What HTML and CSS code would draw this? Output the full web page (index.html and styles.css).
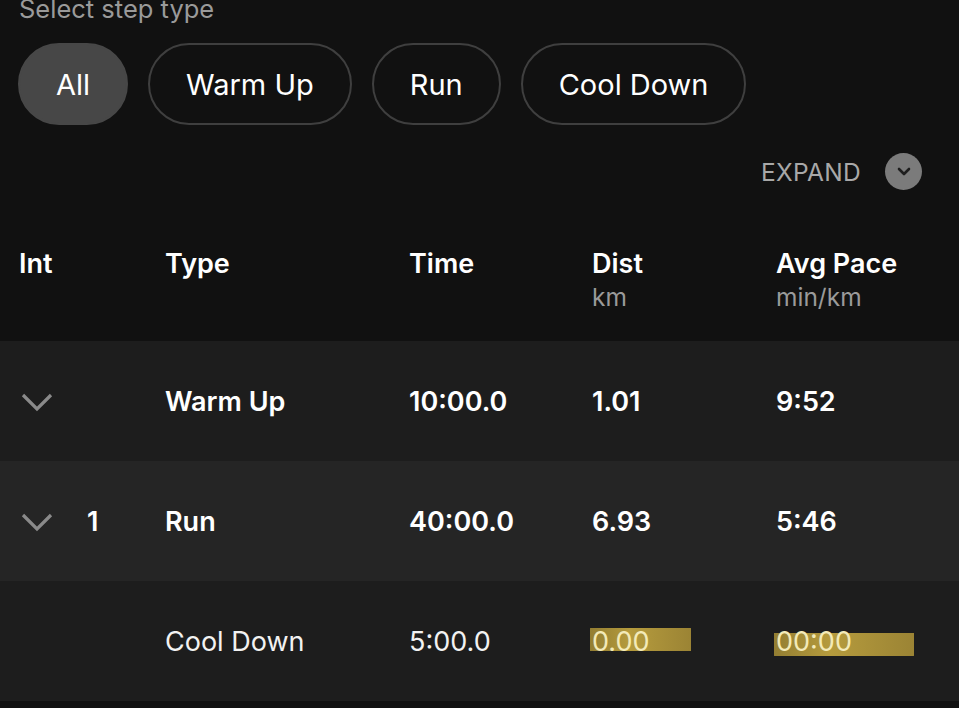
FILE: index.html
```html
<!DOCTYPE html>
<html lang="en">
<head>
<meta charset="utf-8">
<title>Workout steps</title>
<link rel="stylesheet" href="styles.css">
</head>
<body>
<div class="top">
  <div class="label">Select step type</div>
  <div class="pills">
    <button class="pill active">All</button>
    <button class="pill">Warm Up</button>
    <button class="pill">Run</button>
    <button class="pill">Cool Down</button>
  </div>
  <div class="expand">
    <span class="expand-text">EXPAND</span>
    <span class="expand-btn">
      <svg width="14" height="9" viewBox="0 0 14 9"><polyline points="2,2 7,7 12,2" fill="none" stroke="#1e1e1e" stroke-width="2.6" stroke-linecap="round" stroke-linejoin="round"/></svg>
    </span>
  </div>
</div>

<div class="table">
  <div class="row head">
    <div class="cell">Int</div>
    <div class="cell">Type</div>
    <div class="cell">Time</div>
    <div class="cell">Dist<span class="unit">km</span></div>
    <div class="cell">Avg Pace<span class="unit">min/km</span></div>
  </div>

  <div class="row body odd">
    <div class="cell int">
      <svg class="chev" width="32" height="19" viewBox="0 0 32 19"><polyline points="2,2 16,16 30,2" fill="none" stroke="#8a8a8a" stroke-width="3.2"/></svg>
    </div>
    <div class="cell">Warm Up</div>
    <div class="cell">10:00.0</div>
    <div class="cell">1.01</div>
    <div class="cell">9:52</div>
  </div>

  <div class="row body even">
    <div class="cell int">
      <svg class="chev" width="32" height="19" viewBox="0 0 32 19"><polyline points="2,2 16,16 30,2" fill="none" stroke="#8a8a8a" stroke-width="3.2"/></svg>
      <span class="num">1</span>
    </div>
    <div class="cell">Run</div>
    <div class="cell">40:00.0</div>
    <div class="cell">6.93</div>
    <div class="cell">5:46</div>
  </div>

  <div class="row body odd light">
    <div class="cell int"></div>
    <div class="cell">Cool Down</div>
    <div class="cell">5:00.0</div>
    <div class="cell"><span class="hl hl-dist">0.00</span></div>
    <div class="cell"><span class="hl hl-pace">00:00</span></div>
  </div>
</div>
</body>
</html>
```

FILE: styles.css
```css
* { box-sizing: border-box; }

html, body {
  margin: 0;
  padding: 0;
  background: #111111;
  color: #ffffff;
  font-family: Inter, "Noto Sans", "Liberation Sans", sans-serif;
  height: 708px;
  overflow: hidden;
}

.top {
  padding: 0 19px 0 19px;
}

.label {
  font-size: 25.5px;
  line-height: 22px;
  margin-top: -2px;
  color: #9a9a9a;
}

.pills {
  display: flex;
  gap: 20px;
  margin-top: 23px;
  margin-left: -1px;
}

.pill {
  height: 82px;
  padding: 0 36px;
  border-radius: 41px;
  border: 2px solid #3f3f3f;
  background: transparent;
  color: #ffffff;
  font-family: inherit;
  font-size: 29px;
  font-weight: 400;
}

.pill.active {
  background: #474747;
  border-color: #474747;
}

.expand {
  display: flex;
  justify-content: flex-end;
  align-items: center;
  gap: 24px;
  height: 37px;
  margin-top: 28px;
  padding-right: 18px;
}

.expand-text {
  font-size: 24.5px;
  color: #a8a8a8;
  letter-spacing: 0.3px;
}

.expand-btn {
  width: 37px;
  height: 37px;
  border-radius: 50%;
  background: #7b7b7b;
  display: flex;
  align-items: center;
  justify-content: center;
}

.row {
  display: grid;
  grid-template-columns: 146px 244px 183px 184px 1fr;
  padding-left: 19px;
}

.head {
  padding-top: 58px;
  height: 151px;
  font-size: 27px;
  font-weight: 600;
  line-height: 32px;
}

.unit {
  display: block;
  margin-top: 4px;
  font-size: 24.5px;
  line-height: 26px;
  font-weight: 400;
  color: #9a9a9a;
}

.body {
  height: 120px;
  align-items: center;
  font-size: 27px;
  font-weight: 600;
  line-height: 32px;
  padding-top: 2px;
}

.odd { background: #1d1d1d; }
.even { background: #252525; }

.light { font-weight: 400; color: #f2f2f2; }

.int {
  display: flex;
  align-items: center;
  gap: 34px;
}

.chev {
  margin-left: 2px;
  display: block;
}

.num { font-weight: 600; }

.hl {
  display: inline-block;
  color: #f3eab8;
  background-image: linear-gradient(90deg, rgba(168,143,54,0.85), #b59b3d 40%, rgba(169,143,55,0.9));
  background-repeat: no-repeat;
  border-radius: 3px;
}

.hl-dist {
  width: 101px;
  margin-left: -2px;
  padding-left: 2px;
  background-size: 100% 23px;
  background-position: 0 2px;
}

.hl-pace {
  width: 140px;
  margin-left: -2px;
  padding-left: 2px;
  background-size: 100% 23px;
  background-position: 0 7px;
}
```
